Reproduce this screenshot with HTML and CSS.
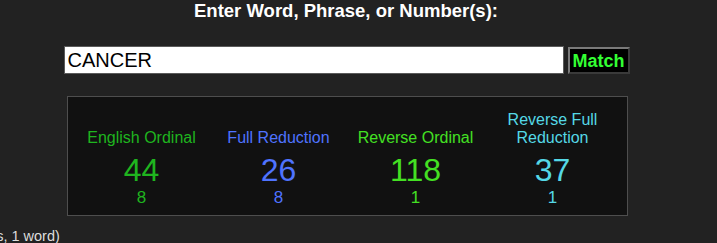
FILE: index.html
```html
<!DOCTYPE html>
<html>
<head>
<meta charset="utf-8">
<link rel="stylesheet" href="styles.css">
</head>
<body>
<div class="page">
  <h1 class="title">Enter Word, Phrase, or Number(s):</h1>
  <form class="search">
    <input class="search-input" type="text" value="CANCER">
    <button class="match-btn" type="button">Match</button>
  </form>
  <div class="results">
    <div class="cipher eo">
      <div class="label">English Ordinal</div>
      <div class="value">44</div>
      <div class="reduced">8</div>
    </div>
    <div class="cipher fr">
      <div class="label">Full Reduction</div>
      <div class="value">26</div>
      <div class="reduced">8</div>
    </div>
    <div class="cipher ro">
      <div class="label">Reverse Ordinal</div>
      <div class="value">118</div>
      <div class="reduced">1</div>
    </div>
    <div class="cipher rfr">
      <div class="label">Reverse Full Reduction</div>
      <div class="value">37</div>
      <div class="reduced">1</div>
    </div>
  </div>
  <div class="stats">(6 letters, 1 word)</div>
</div>
</body>
</html>
```

FILE: styles.css
```css
html, body {
  margin: 0;
  padding: 0;
  background: #222222;
  overflow: hidden;
}
body {
  font-family: "Liberation Sans", Arial, sans-serif;
  color: #fff;
}
.page {
  width: 692px;
  display: flex;
  flex-direction: column;
  align-items: center;
}
.title {
  margin: 2px 0 0 0;
  font-size: 18.5px;
  line-height: 18px;
  font-weight: bold;
  color: #fff;
}
.search {
  display: flex;
  align-items: flex-start;
  gap: 4px;
  margin: 26px 0 0 0;
  padding-left: 1px;
}
.search-input {
  box-sizing: border-box;
  width: 500px;
  height: 28px;
  margin: 0;
  padding: 0 0 0 3px;
  border: 1px solid #5a5a5a;
  background: #fff;
  color: #000;
  font-family: "Liberation Sans", Arial, sans-serif;
  font-size: 20px;
  outline: none;
}
.match-btn {
  box-sizing: border-box;
  width: 62px;
  height: 27px;
  margin: 1px 0 0 0;
  padding: 0;
  background: #000;
  border: 2px solid;
  border-color: #7a7a7a #3a3a3a #3a3a3a #7a7a7a;
  color: #33ff33;
  font-family: "Liberation Sans", Arial, sans-serif;
  font-weight: bold;
  font-size: 18px;
  line-height: 22px;
}
.results {
  box-sizing: border-box;
  width: 561px;
  margin-top: 22px;
  margin-left: 2px;
  padding: 14px 0 8px 0;
  background: #111111;
  border: 1px solid #4e4e4e;
  display: flex;
  justify-content: center;
  align-items: flex-end;
}
.cipher {
  width: 137px;
  display: flex;
  flex-direction: column;
  align-items: center;
  text-align: center;
}
.label {
  font-size: 16px;
  line-height: 18px;
  padding: 0 4px;
}
.value {
  margin-top: 5px;
  font-size: 32px;
  line-height: 36px;
}
.reduced {
  font-size: 17px;
  line-height: 18px;
  margin-top: 1px;
}
.eo { color: #1fb51f; }
.fr { color: #4f73ff; }
.ro { color: #44e023; }
.rfr { color: #55d8e6; }
.stats {
  align-self: flex-start;
  margin-top: 11px;
  margin-left: -53px;
  font-size: 14.5px;
  line-height: 18px;
  color: #dddddd;
  white-space: nowrap;
}
```
